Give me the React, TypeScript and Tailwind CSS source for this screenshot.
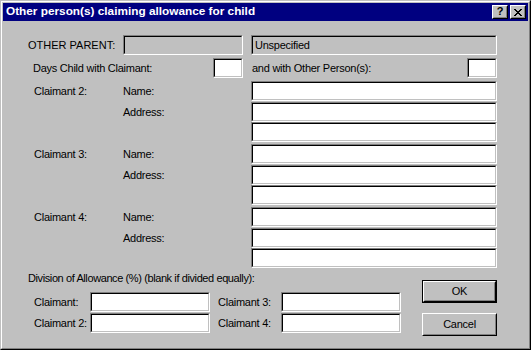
import React from "react";

function Field({ w, grey, children }: { w: string; grey?: boolean; children?: React.ReactNode }) {
  return (
    <div className={`h-[20px] shrink-0 border border-t-[#808080] border-l-[#808080] border-b-white border-r-white ${w}`}>
      <div
        className={`h-full border border-t-black border-l-black border-b-[#c0c0c0] border-r-[#c0c0c0] flex items-center pl-[2px] ${
          grey ? "bg-[#c0c0c0]" : "bg-white"
        }`}
      >
        {children}
      </div>
    </div>
  );
}

function CapBtn({ children, className }: { children: React.ReactNode; className?: string }) {
  return (
    <div className={`w-[16px] h-[14px] shrink-0 border border-t-white border-l-white border-b-black border-r-black bg-[#c0c0c0] ${className ?? ""}`}>
      <div className="w-full h-full border border-t-[#c0c0c0] border-l-[#c0c0c0] border-b-[#808080] border-r-[#808080] flex items-center justify-center">
        {children}
      </div>
    </div>
  );
}

function Btn({ label, isDefault }: { label: string; isDefault?: boolean }) {
  const inner = (
    <div className="w-full h-full border border-t-white border-l-white border-b-black border-r-black">
      <div className="w-full h-full border border-t-[#c0c0c0] border-l-[#c0c0c0] border-b-[#808080] border-r-[#808080] flex items-center justify-center leading-none">
        {label}
      </div>
    </div>
  );
  return isDefault ? (
    <div className="w-[75px] h-[23px] border border-black">{inner}</div>
  ) : (
    <div className="w-[75px] h-[23px]">{inner}</div>
  );
}

function ClaimantBlock({ n, className }: { n: number; className?: string }) {
  return (
    <div className={`flex flex-col ${className ?? ""}`}>
      <div className="flex items-center h-[20px] pl-[31px]">
        <span className="w-[89px] shrink-0">Claimant {n}:</span>
        <span className="w-[128px] shrink-0">Name:</span>
        <Field w="w-[246px]" />
      </div>
      <div className="flex items-center h-[20px] pl-[31px] mt-[1px]">
        <span className="w-[89px] shrink-0"></span>
        <span className="w-[128px] shrink-0">Address:</span>
        <Field w="w-[246px]" />
      </div>
      <div className="flex items-center h-[20px] pl-[31px]">
        <span className="w-[217px] shrink-0"></span>
        <Field w="w-[246px]" />
      </div>
    </div>
  );
}

export default function App() {
  return (
    <div className="w-[531px] h-[350px] bg-[#c0c0c0] border border-t-[#c0c0c0] border-l-[#c0c0c0] border-b-black border-r-black font-['Liberation_Sans',Arial,sans-serif] text-[11px] tracking-[-0.25px] text-black leading-[14px] overflow-hidden">
      <div className="h-full border border-t-white border-l-white border-b-[#808080] border-r-[#808080] p-px flex flex-col">
        {/* Title bar */}
        <div className="h-[18px] shrink-0 bg-[#000080] flex items-center pl-[3px] pr-[2px]">
          <span className="flex-1 text-white font-bold text-[11.8px] tracking-[0px] leading-none whitespace-nowrap">
            Other person(s) claiming allowance for child
          </span>
          <CapBtn>
            <span className="font-bold text-[11px] leading-none tracking-[0px] -mt-px">?</span>
          </CapBtn>
          <CapBtn className="ml-[2px]">
            <svg width="8" height="7" viewBox="0 0 8 7" shapeRendering="crispEdges">
              <path
                fill="#000"
                d="M0 0h2v1H0zM6 0h2v1H6zM1 1h2v1H1zM5 1h2v1H5zM2 2h4v1H2zM3 3h2v1H3zM2 4h4v1H2zM1 5h2v1H1zM5 5h2v1H5zM0 6h2v1H0zM6 6h2v1H6z"
              />
            </svg>
          </CapBtn>
        </div>

        {/* OTHER PARENT */}
        <div className="flex items-center h-[20px] mt-[14px] pl-[25px]">
          <span className="w-[95px] shrink-0 tracking-[0px]">OTHER PARENT:</span>
          <Field w="w-[120px]" grey />
          <div className="w-[8px] shrink-0" />
          <Field w="w-[246px]" grey>
            <span>Unspecified</span>
          </Field>
        </div>

        {/* Days */}
        <div className="flex items-center h-[20px] mt-[3px] pl-[30px]">
          <span className="w-[180px] shrink-0">Days Child with Claimant:</span>
          <Field w="w-[30px]" />
          <span className="w-[215px] shrink-0 ml-[9px]">and with Other Person(s):</span>
          <Field w="w-[30px]" />
        </div>

        <ClaimantBlock n={2} className="mt-[3px]" />
        <ClaimantBlock n={3} className="mt-[2px]" />
        <ClaimantBlock n={4} className="mt-[2px]" />

        {/* Bottom */}
        <div className="flex">
          <div className="w-[419px] shrink-0 flex flex-col">
            <div className="mt-[3px] pl-[25px] h-[14px] tracking-[-0.4px] whitespace-nowrap">Division of Allowance (%) (blank if divided equally):</div>
            <div className="flex items-center h-[20px] mt-[7px] pl-[31px]">
              <span className="w-[56px] shrink-0">Claimant:</span>
              <Field w="w-[120px]" />
              <span className="w-[63px] shrink-0 ml-[8px]">Claimant 3:</span>
              <Field w="w-[120px]" />
            </div>
            <div className="flex items-center h-[20px] mt-[1px] pl-[31px]">
              <span className="w-[56px] shrink-0">Claimant 2:</span>
              <Field w="w-[120px]" />
              <span className="w-[63px] shrink-0 ml-[8px]">Claimant 4:</span>
              <Field w="w-[120px]" />
            </div>
          </div>
          <div className="flex flex-col mt-[12px]">
            <Btn label="OK" isDefault />
            <div className="h-[10px]" />
            <Btn label="Cancel" />
          </div>
        </div>
      </div>
    </div>
  );
}
